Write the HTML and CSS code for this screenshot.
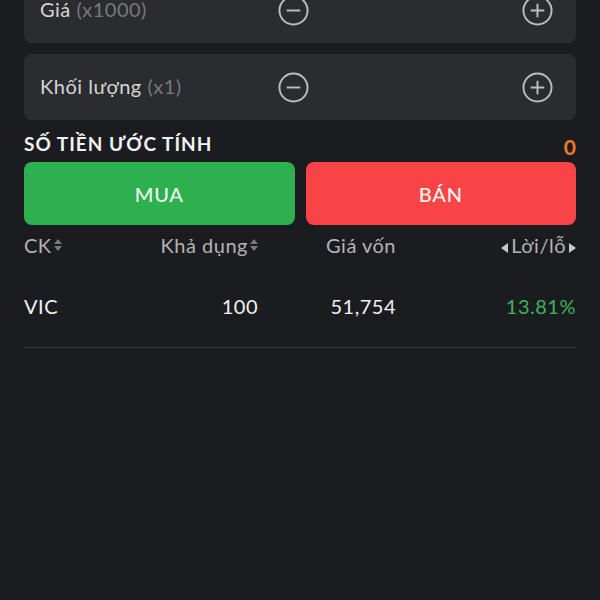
FILE: index.html
```html
<!DOCTYPE html>
<html lang="vi">
<head>
    <meta charset="UTF-8">
    <meta name="viewport" content="width=device-width, initial-scale=1.0">
    <title>Đặt lệnh</title>
    <link rel="stylesheet" href="styles.css">
</head>
<body>
    <main class="order">
        <div class="field">
            <span class="label">Giá <em>(x1000)</em></span>
            <svg class="step" viewBox="0 0 32 32"><circle cx="16" cy="16" r="14.5"/><path d="M9 16h14"/></svg>
            <span class="spacer"></span>
            <svg class="step" viewBox="0 0 32 32"><circle cx="16" cy="16" r="14.5"/><path d="M9 16h14M16 9v14"/></svg>
        </div>
        <div class="field">
            <span class="label">Khối lượng <em>(x1)</em></span>
            <svg class="step" viewBox="0 0 32 32"><circle cx="16" cy="16" r="14.5"/><path d="M9 16h14"/></svg>
            <span class="spacer"></span>
            <svg class="step" viewBox="0 0 32 32"><circle cx="16" cy="16" r="14.5"/><path d="M9 16h14M16 9v14"/></svg>
        </div>

        <div class="estimate">
            <span>SỐ TIỀN ƯỚC TÍNH</span>
            <span class="amount">0</span>
        </div>

        <div class="actions">
            <button class="buy">MUA</button>
            <button class="sell">BÁN</button>
        </div>

        <div class="table head">
            <span>CK<i class="sort"></i></span>
            <span class="num">Khả dụng<i class="sort"></i></span>
            <span class="num">Giá vốn</span>
            <span class="num"><i class="arrow left"></i>Lời/lỗ<i class="arrow right"></i></span>
        </div>
        <div class="table row">
            <span>VIC</span>
            <span class="num">100</span>
            <span class="num">51,754</span>
            <span class="num up">13.81%</span>
        </div>
    </main>
</body>
</html>
```

FILE: styles.css
```css
body {
    margin: 0;
    background-color: #1b1c20;
    color: #f2f2f2;
    font-family: Lato, "Open Sans", sans-serif;
    font-size: 20px;
    letter-spacing: 0.5px;
}
.order {
    margin-top: -23px;
    padding: 0 24px;
}
.field {
    display: flex;
    align-items: center;
    height: 66px;
    margin-bottom: 11px;
    padding: 0 23px 0 16px;
    background: #2b2c2f;
    border-radius: 8px;
}
.label {
    width: 238px;
    color: #d6d6d6;
    padding-bottom: 2px;
}
.label em {
    font-style: normal;
    color: #77787b;
}
.spacer {
    flex: 1;
}
.step {
    width: 31px;
    height: 31px;
    fill: none;
    stroke: #bdbdbd;
    stroke-width: 2;
}
.estimate {
    display: flex;
    justify-content: space-between;
    align-items: center;
    height: 24px;
    font-size: 19px;
    font-weight: bold;
    letter-spacing: 1px;
}
.amount {
    color: #f07a2a;
    font-size: 21px;
    padding-top: 6px;
    letter-spacing: 0;
}
.actions {
    display: flex;
    gap: 11px;
    margin-top: 7px;
}
.actions button {
    flex: 1;
    height: 63px;
    border: none;
    border-radius: 8px;
    font-family: inherit;
    font-size: 20px;
    font-weight: 500;
    color: #eef7ee;
    letter-spacing: 0.8px;
}
.buy {
    background: #2eb04f;
}
.sell {
    background: #f84447;
}
.table {
    display: grid;
    grid-template-columns: 120px 114px 138px 180px;
    line-height: 24px;
}
.table .num {
    text-align: right;
}
.head {
    margin-top: 8px;
    color: #b4b4b4;
}
.row {
    padding: 37px 0 29px;
    border-bottom: 1px solid #333438;
}
.up {
    color: #3bb45a;
}
.sort {
    display: inline-block;
    width: 0;
    height: 0;
    margin-left: 2px;
    vertical-align: 9px;
    border-left: 4px solid transparent;
    border-right: 4px solid transparent;
    border-bottom: 5px solid #77787c;
    position: relative;
}
.sort::after {
    content: "";
    position: absolute;
    left: -4px;
    top: 7px;
    border-left: 4px solid transparent;
    border-right: 4px solid transparent;
    border-top: 5px solid #77787c;
}
.arrow {
    display: inline-block;
    width: 0;
    height: 0;
    vertical-align: 0;
    border-top: 5px solid transparent;
    border-bottom: 5px solid transparent;
}
.arrow.left {
    margin-right: 3px;
    border-right: 7px solid #c8c8c8;
}
.arrow.right {
    margin-left: 3px;
    border-left: 7px solid #c8c8c8;
}
```
